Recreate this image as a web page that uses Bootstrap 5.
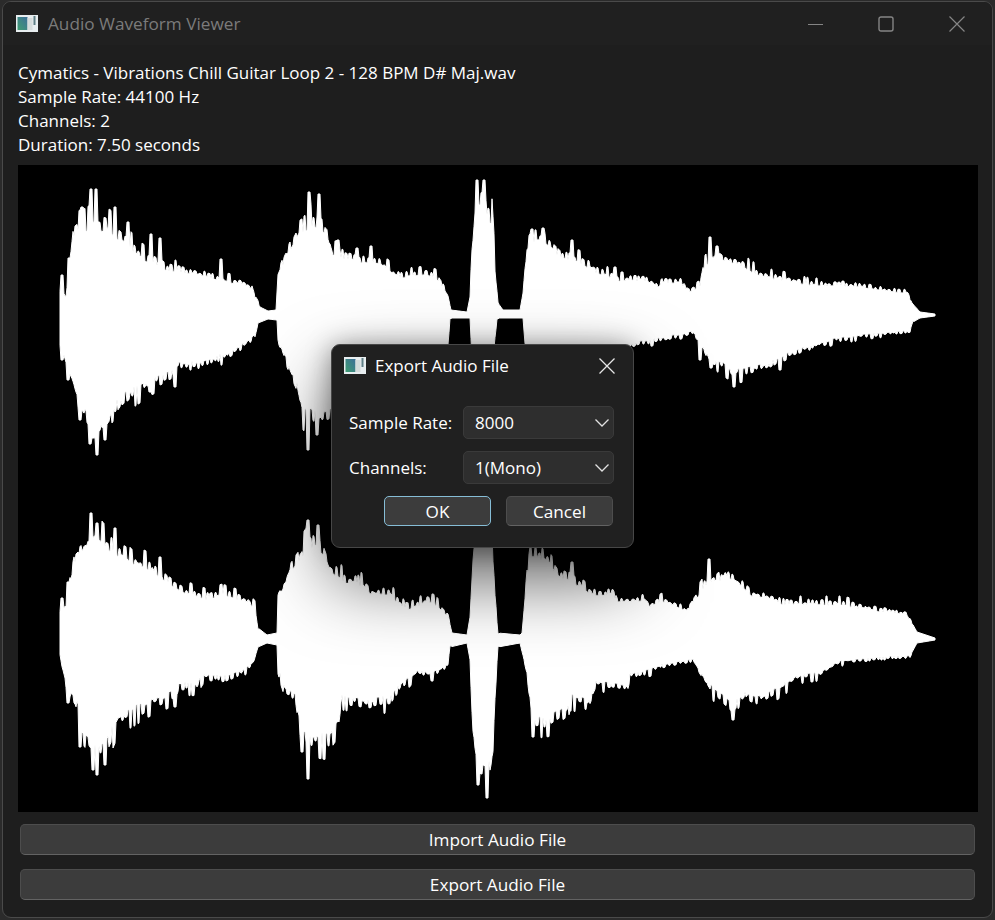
<!DOCTYPE html>
<html lang="en">
<head>
  <title>Audio Waveform Viewer</title>
  <link href="https://cdn.jsdelivr.net/npm/bootstrap@5.3.0/dist/css/bootstrap.min.css" rel="stylesheet" />
  <style>
    html, body { height: 100%; }
    body { background: #2b2b2b; font-family: "Open Sans", "Liberation Sans", sans-serif; color: #fff; overflow: hidden; }
    .app-window { position: relative; width: 991px; height: 917px; margin: 1px 0 0 2px; background: #1e1e1e; border: 1px solid #4a4a4a; border-radius: 9px; overflow: hidden; }
    .title-bar { height: 43px; background: #202020; color: #7b7b7b; font-size: 17.2px; padding-left: 13px; }
    .title-text { padding-left: 2px; }
    .caption-btns svg { display: block; }
    .caption-btn { width: 71px; }
    .file-info { padding: 16px 15px 0; height: 120px; font-size: 17px; line-height: 24px; color: #fff; margin: 0; }
    .wave-box { margin: 0 14px 0 15px; height: 647px; background: #000; }
    .wave-box svg { display: block; }
    .btn-stack { padding: 12px 17px 0; gap: 14px; }
    .qt-btn { height: 31px; padding: 0; background: #3c3c3c; border: 1px solid #4d4d4d; border-bottom-color: #636363; border-radius: 5px; color: #fff; font-size: 17.2px; line-height: 30px; }
    .qt-btn:hover, .qt-btn:active { background: #3c3c3c; color: #fff; border-color: #4d4d4d; }
    .export-dialog { position: absolute; left: 328px; top: 342px; width: 303px; height: 204px; background: #202020; border: 1px solid #474747; border-radius: 9px; box-shadow: 0 32px 72px rgba(0, 0, 0, .62), 0 2px 26px rgba(0, 0, 0, .38); font-size: 17px; }
    .dialog-title { height: 41px; padding: 0 18px 0 12px; }
    .dialog-title span { padding-left: 1px; }
    .dialog-body { padding: 20px 19px 0 17px; }
    .field-row { height: 33px; margin-bottom: 12px; }
    .field-label { width: 114px; }
    .combo { position: relative; width: 151px; height: 33px; background: #2e2e2e; border: 1px solid #3a3a3a; border-radius: 5px; padding-left: 11px; line-height: 31px; }
    .combo svg { position: absolute; right: 3px; top: 11px; }
    .dialog-btns { gap: 15px; padding-left: 35px; }
    .dialog-btns .qt-btn { width: 107px; height: 30px; line-height: 29px; }
    .dialog-btns .qt-default { border: 1.5px solid #86bdd6; }
    .dialog-btns .qt-default:hover { border-color: #86bdd6; }
  </style>
</head>
<body>
  <div class="app-window">
    <div class="title-bar d-flex align-items-center">
      <svg width="22" height="17" viewBox="0 0 22 17" class="me-2 flex-shrink-0">
        <defs>
          <linearGradient id="iconFill" x1="0" y1="1" x2="1" y2="0">
            <stop offset="0" stop-color="#3f9d72" />
            <stop offset="1" stop-color="#3d6f98" />
          </linearGradient>
        </defs>
        <rect width="22" height="17" fill="#e8eef0" />
        <rect x="1.5" y="2" width="10" height="13" fill="url(#iconFill)" />
        <rect x="11.5" y="3" width="5" height="12" fill="#d5dcdc" />
        <rect x="17.5" y="1" width="2" height="9" fill="#5f7f86" />
      </svg>
      <span class="flex-grow-1 title-text">Audio Waveform Viewer</span>
      <div class="caption-btns d-flex">
        <div class="caption-btn d-flex justify-content-center"><svg width="16" height="16" viewBox="0 0 16 16"><path d="M1 8.5h15" stroke="#858585" /></svg></div>
        <div class="caption-btn d-flex justify-content-center"><svg width="16" height="16" viewBox="0 0 16 16"><rect x="1" y="1" width="14" height="14" rx="2" fill="none" stroke="#858585" stroke-width="1.4" /></svg></div>
        <div class="caption-btn d-flex justify-content-center"><svg width="16" height="16" viewBox="0 0 16 16"><path d="M.5 .5l15 15M15.5 .5l-15 15" stroke="#858585" stroke-width="1.2" /></svg></div>
      </div>
    </div>

    <p class="file-info">
      Cymatics - Vibrations Chill Guitar Loop 2 - 128 BPM D# Maj.wav<br />
      Sample Rate: 44100 Hz<br />
      Channels: 2<br />
      Duration: 7.50 seconds
    </p>

    <div class="wave-box">
      <svg id="waveform" width="960" height="647" viewBox="18 165 960 647"></svg>
    </div>

    <div class="btn-stack d-flex flex-column">
      <button class="btn qt-btn" type="button">Import Audio File</button>
      <button class="btn qt-btn" type="button">Export Audio File</button>
    </div>

    <div class="export-dialog">
      <div class="dialog-title d-flex align-items-center">
        <svg width="22" height="17" viewBox="0 0 22 17" class="me-2 flex-shrink-0">
          <rect width="22" height="17" fill="#e8eef0" />
          <rect x="1.5" y="2" width="10" height="13" fill="url(#iconFill)" />
          <rect x="11.5" y="3" width="5" height="12" fill="#d5dcdc" />
          <rect x="17.5" y="1" width="2" height="9" fill="#5f7f86" />
        </svg>
        <span class="flex-grow-1">Export Audio File</span>
        <svg width="16" height="16" viewBox="0 0 16 16"><path d="M.5 .5l15 15M15.5 .5l-15 15" stroke="#e6e6e6" stroke-width="1.3" /></svg>
      </div>
      <div class="dialog-body">
        <div class="field-row d-flex align-items-center">
          <span class="field-label">Sample Rate:</span>
          <div class="combo">8000<svg width="16" height="10" viewBox="0 0 16 10"><path d="M1.5 1.5l6.5 6.5 6.5-6.5" fill="none" stroke="#e2e2e2" stroke-width="1.3" /></svg></div>
        </div>
        <div class="field-row d-flex align-items-center">
          <span class="field-label">Channels:</span>
          <div class="combo">1(Mono)<svg width="16" height="10" viewBox="0 0 16 10"><path d="M1.5 1.5l6.5 6.5 6.5-6.5" fill="none" stroke="#e2e2e2" stroke-width="1.3" /></svg></div>
        </div>
        <div class="dialog-btns d-flex">
          <button class="btn qt-btn qt-default" type="button">OK</button>
          <button class="btn qt-btn" type="button">Cancel</button>
        </div>
      </div>
    </div>
  </div>

  <script src="https://cdn.jsdelivr.net/npm/bootstrap@5.3.0/dist/js/bootstrap.bundle.min.js"></script>
  <script>
    // envelopes traced from the picture, flat lists of x,y in page pixels
    const topUpper = [60,292,66,296,69,272,73,232,78,228,85,226,92,222,100,224,110,227,118,234,128,242,135,250,145,257,155,260,165,267,180,270,200,274,215,278,240,282,252,287,256,300,260,307,268,311,276,310,278,274,285,257,293,242,300,228,310,222,320,226,327,234,332,252,350,258,378,262,393,272,403,276,427,274,437,277,447,292,451,310,467,312,470,297,473,237,476,196,485,196,488,215,492,218,495,270,498,303,503,310,520,310,523,293,527,246,532,238,543,238,550,244,562,256,580,261,590,266,600,272,620,279,647,279,657,286,663,280,682,282,688,291,700,286,704,266,717,252,725,258,733,262,743,264,752,270,767,276,787,279,810,284,843,284,862,286,887,290,907,292,912,303,920,312,935,314];
    const topLower = [60,340,63,350,68,368,73,382,80,405,90,420,97,428,105,424,112,414,120,402,133,392,150,382,175,372,177,366,200,364,223,356,240,348,255,336,258,323,268,319,277,320,278,340,287,362,297,385,302,410,317,420,327,415,345,410,380,390,420,375,447,360,450,318,470,318,473,380,490,390,497,318,523,318,527,370,535,380,570,376,600,362,633,344,667,338,693,332,700,342,708,358,717,362,734,372,763,368,780,358,800,350,833,340,867,335,910,331,913,322,920,318,935,316];
    const botUpper = [60,616,66,606,68,588,75,556,82,549,97,535,105,544,122,551,128,554,135,561,152,568,167,581,183,590,207,597,222,593,247,600,255,607,258,628,267,635,277,633,278,594,285,583,290,569,298,558,310,540,323,549,330,568,345,580,357,580,373,593,390,593,407,609,427,600,435,602,448,616,452,633,467,635,470,617,473,560,476,520,488,520,493,560,495,600,498,633,520,635,522,633,527,575,530,555,542,555,550,559,560,573,580,583,593,592,613,593,617,601,645,598,650,606,663,600,687,610,703,587,725,573,742,585,752,593,785,603,825,603,843,603,860,607,907,614,917,632,935,638];
    const botLower = [60,654,63,672,68,692,75,700,78,708,80,730,93,748,105,748,112,732,118,718,133,712,148,704,175,694,178,686,197,686,203,676,223,678,240,672,253,664,258,647,267,643,277,645,278,668,285,690,295,694,298,716,302,736,317,738,330,740,338,728,342,698,355,700,368,703,390,700,398,689,417,672,433,674,448,664,450,647,467,643,470,660,473,735,478,765,490,770,493,755,495,693,498,647,520,643,527,673,533,722,550,720,567,710,570,698,588,703,597,682,617,686,627,688,630,676,663,666,693,660,710,688,733,706,747,694,760,699,778,689,800,676,817,674,843,661,910,656,917,643,935,640];

    // tall narrow peaks that stick out of the envelope
    const topUpperPeaks = [[62,275],[69,258],[91,189],[96,189],[82,207],[115,207],[128,222],[151,234],[160,238],[221,259],[309,192],[319,194],[338,240],[357,248],[371,246],[477,180],[484,180],[532,229],[543,228],[572,240],[615,267],[710,237],[717,246]];
    const topLowerPeaks = [[62,360],[68,380],[97,455],[90,444],[105,440],[80,420],[93,438],[175,387],[150,392],[308,450],[317,435],[734,387],[780,370],[700,360],[711,368]];
    const botUpperPeaks = [[62,598],[68,582],[91,513],[97,523],[115,528],[160,557],[308,520],[318,525],[572,562],[709,559]];
    const botLowerPeaks = [[68,703],[80,747],[97,775],[93,770],[105,765],[175,707],[308,779],[302,752],[478,785],[487,798],[533,737],[733,720]];

    let seed = 11;
    function rnd() {
      seed = (seed * 16807) % 2147483647;
      return seed / 2147483647;
    }

    function envelopeAt(pts, x) {
      for (let i = 0; i < pts.length - 2; i += 2) {
        if (x <= pts[i + 2]) {
          const t = (x - pts[i]) / (pts[i + 2] - pts[i]);
          return pts[i + 1] + (pts[i + 3] - pts[i + 1]) * t;
        }
      }
      return pts[pts.length - 1];
    }

    // bars of 2-3 px with notches between them, outward = -1 for the upper side
    function outline(pts, peaks, outward, center) {
      const ys = [];
      let left = 0, shift = 0, isTooth = false;
      for (let x = 60; x <= 935; x++) {
        let y = envelopeAt(pts, x);
        const depth = Math.abs(y - center);
        if (left <= 0) {
          isTooth = !isTooth;
          left = isTooth ? 2 + Math.floor(rnd() * 2) : 1 + Math.floor(rnd() * 3);
          if (depth < 14) shift = 0;
          else if (isTooth) shift = (rnd() < 0.15 ? 0.2 : rnd() * 0.11) * depth;
          else shift = -rnd() * 0.08 * depth;
        }
        y += outward * shift;
        left--;
        peaks.forEach(p => {
          if (Math.abs(p[0] - x) <= 1) y = outward < 0 ? Math.min(y, p[1]) : Math.max(y, p[1]);
        });
        ys.push(y);
      }
      return ys;
    }

    function drawChannel(svg, upper, lower, upPeaks, lowPeaks, center) {
      const a = outline(upper, upPeaks, -1, center);
      const b = outline(lower, lowPeaks, 1, center);
      let pts = a.map((y, i) => (60 + i) + ',' + y.toFixed(1));
      pts = pts.concat(b.map((y, i) => (60 + i) + ',' + y.toFixed(1)).reverse());
      const poly = document.createElementNS('http://www.w3.org/2000/svg', 'polygon');
      poly.setAttribute('points', pts.join(' '));
      poly.setAttribute('fill', '#fff');
      poly.setAttribute('stroke', '#fff');
      poly.setAttribute('stroke-width', '1');
      poly.setAttribute('stroke-linejoin', 'round');
      svg.appendChild(poly);
    }

    const svg = document.getElementById('waveform');
    drawChannel(svg, topUpper, topLower, topUpperPeaks, topLowerPeaks, 314);
    drawChannel(svg, botUpper, botLower, botUpperPeaks, botLowerPeaks, 638);
  </script>
</body>
</html>
